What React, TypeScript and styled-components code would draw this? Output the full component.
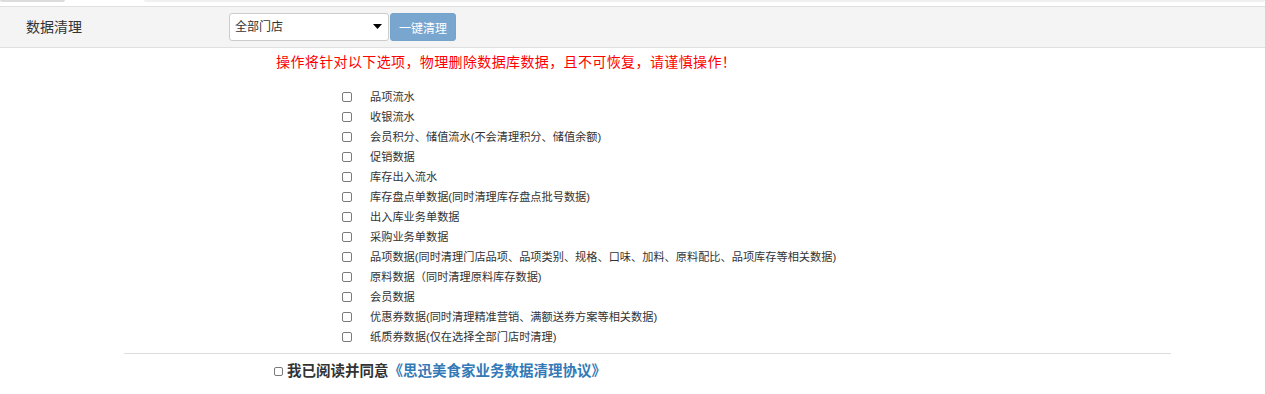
import React from "react";
import styled, { createGlobalStyle } from "styled-components";

const GlobalStyle = createGlobalStyle`
  html, body { margin: 0; padding: 0; background: #fff; }
  body {
    font-family: "Liberation Sans", "Noto Sans CJK SC", sans-serif;
    color: #333;
    font-size: 12px;
  }
  * { box-sizing: border-box; }
`;

const Page = styled.div`
  display: flex;
  flex-direction: column;
  width: 1265px;
`;

const TabStrip = styled.div`
  display: flex;
  height: 2px;
  margin-bottom: 4px;
`;

const TabPiece = styled.div<{ $w?: number; $bg: string }>`
  height: 2px;
  background: ${(p) => p.$bg};
  ${(p) => (p.$w ? `width: ${p.$w}px;` : "flex: 1;")}
  border-radius: 0 0 2px 2px;
`;

const Header = styled.div`
  display: flex;
  align-items: center;
  height: 42px;
  background: #f4f4f4;
  border-top: 1px solid #e0e0e0;
  border-bottom: 1px solid #e0e0e0;
  padding-left: 26px;
`;

const Title = styled.div`
  width: 203px;
  font-size: 14px;
  line-height: 20px;
  color: #333;
`;

const SelectWrap = styled.div`
  position: relative;
  width: 160px;
  height: 28px;
`;

const Select = styled.select`
  appearance: none;
  -webkit-appearance: none;
  width: 100%;
  height: 100%;
  border: 1px solid #ccc;
  border-radius: 3px;
  background: #fff;
  font-family: "Liberation Sans", "Noto Sans CJK SC", sans-serif;
  font-size: 12px;
  color: #333;
  padding: 0 0 0 5px;
  outline: none;
`;

const Caret = styled.svg`
  position: absolute;
  right: 7px;
  top: 11px;
  pointer-events: none;
`;

const ClearButton = styled.button`
  height: 28px;
  width: 66px;
  margin-left: 1px;
  border: 1px solid #74a3cb;
  border-radius: 3px;
  background: #79a6cf;
  color: #fff;
  font-family: "Liberation Sans", "Noto Sans CJK SC", sans-serif;
  font-size: 12px;
  padding: 0;
  cursor: not-allowed;
`;

const Warning = styled.div`
  margin: 4px 0 0 276px;
  font-size: 14px;
  line-height: 20px;
  letter-spacing: 0.38px;
  color: #ff0000;
`;

const OptionList = styled.ul`
  list-style: none;
  margin: 15px 0 0 0;
  padding: 0 0 0 342px;
  display: flex;
  flex-direction: column;
`;

const OptionRow = styled.li`
  display: flex;
  align-items: center;
  height: 20px;
`;

const Box = styled.span<{ $size?: number }>`
  display: inline-block;
  width: ${(p) => p.$size ?? 10}px;
  height: ${(p) => p.$size ?? 10}px;
  border: 1px solid #7a7a7a;
  border-radius: 2px;
  background: #fff;
  flex: none;
`;

const OptionLabel = styled.span`
  margin-left: 18px;
  font-size: 11.2px;
  line-height: 16px;
  color: #333;
  white-space: nowrap;
`;

const Divider = styled.hr`
  border: 0;
  border-top: 1px solid #ddd;
  margin: 6px 94px 0 124px;
  height: 0;
`;

const Agree = styled.div`
  display: flex;
  align-items: center;
  margin: 7px 0 0 274px;
  font-size: 14.5px;
  line-height: 20px;
  font-weight: bold;
  color: #333;
`;

const AgreeText = styled.span`
  margin-left: 4px;
`;

const Link = styled.a`
  color: #337ab7;
  text-decoration: none;
`;

const options = [
  "品项流水",
  "收银流水",
  "会员积分、储值流水(不会清理积分、储值余额)",
  "促销数据",
  "库存出入流水",
  "库存盘点单数据(同时清理库存盘点批号数据)",
  "出入库业务单数据",
  "采购业务单数据",
  "品项数据(同时清理门店品项、品项类别、规格、口味、加料、原料配比、品项库存等相关数据)",
  "原料数据（同时清理原料库存数据)",
  "会员数据",
  "优惠券数据(同时清理精准营销、满额送券方案等相关数据)",
  "纸质券数据(仅在选择全部门店时清理)",
];

export default function App() {
  return (
    <Page>
      <GlobalStyle />
      <TabStrip>
        <TabPiece $w={65} $bg="#dcdcdc" />
        <TabPiece $w={79} $bg="#ffffff" />
        <TabPiece $bg="#f0f0f0" />
      </TabStrip>
      <Header>
        <Title>数据清理</Title>
        <SelectWrap>
          <Select defaultValue="all">
            <option value="all">全部门店</option>
          </Select>
          <Caret width="9" height="5" viewBox="0 0 9 5">
            <path d="M0 0 H9 L4.5 5 Z" fill="#000" />
          </Caret>
        </SelectWrap>
        <ClearButton disabled>一键清理</ClearButton>
      </Header>
      <Warning>操作将针对以下选项，物理删除数据库数据，且不可恢复，请谨慎操作！</Warning>
      <OptionList>
        {options.map((o) => (
          <OptionRow key={o}>
            <Box />
            <OptionLabel>{o}</OptionLabel>
          </OptionRow>
        ))}
      </OptionList>
      <Divider />
      <Agree>
        <Box $size={9} />
        <AgreeText>
          我已阅读并同意<Link href="#">《思迅美食家业务数据清理协议》</Link>
        </AgreeText>
      </Agree>
    </Page>
  );
}
